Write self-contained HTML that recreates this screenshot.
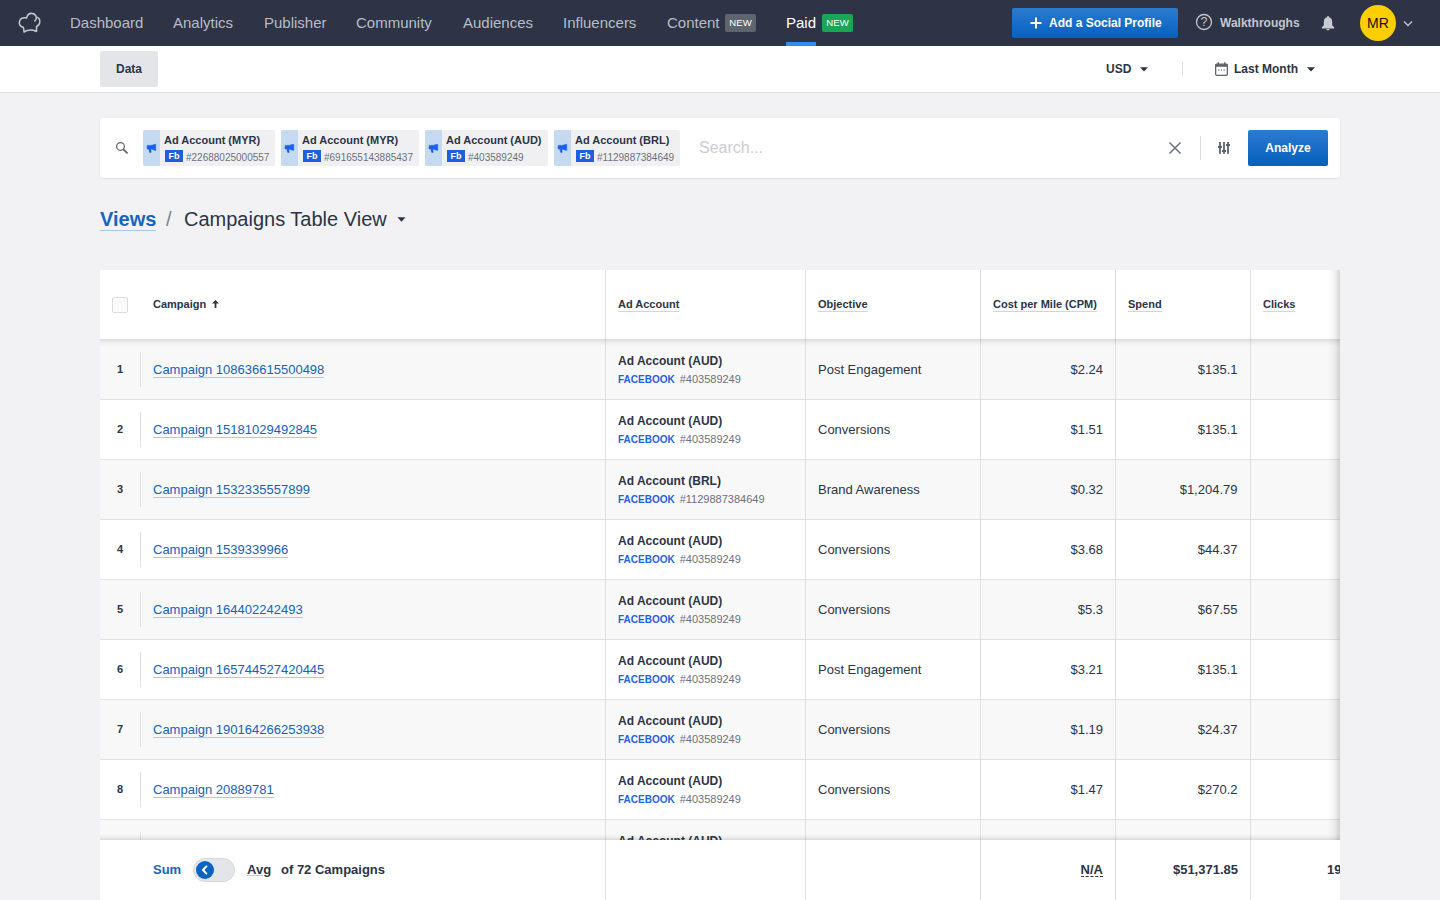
<!DOCTYPE html>
<html><head><meta charset="utf-8">
<style>
*{box-sizing:border-box;margin:0;padding:0}
html,body{width:1440px;height:900px;overflow:hidden;background:#f2f2f4;font-family:"Liberation Sans",sans-serif;color:#2b3445}
.abs{position:absolute}
#nav{position:absolute;left:0;top:0;width:1440px;height:46px;background:#2e3445}
.ni{position:absolute;top:0;height:46px;line-height:45px;font-size:15px;color:#b6bcc9;white-space:nowrap}
.badge{position:absolute;top:14px;height:18px;line-height:18px;font-size:9.5px;font-weight:normal;color:#fff;text-align:center;border-radius:2px;letter-spacing:0.1px}
#sub{position:absolute;left:0;top:46px;width:1440px;height:47px;background:#fff;border-bottom:1px solid #dcdde1}
.tabdata{position:absolute;left:100px;top:5px;width:58px;height:36px;background:#e4e5e8;border-radius:2px;font-size:12px;font-weight:bold;line-height:36px;text-align:center;color:#2b3445}
.bold12{font-size:12px;font-weight:bold;color:#2b3445}
#search{position:absolute;left:100px;top:118px;width:1240px;height:60px;background:#fff;border-radius:3px;box-shadow:0 1px 2px rgba(0,0,0,.08)}
.chip{position:absolute;top:12px;height:36px;background:#f0f0f3;border-radius:2px}
.chip .ic{position:absolute;left:0;top:0;width:17px;height:36px;background:#c5d9f1;border-radius:2px 0 0 2px}
.chip .t1{position:absolute;left:21px;top:4px;font-size:11px;font-weight:bold;color:#2b3445;white-space:nowrap;line-height:13px}
.chip .fb{position:absolute;left:22px;top:20px;width:18px;height:12px;background:#1f5ede;color:#fff;font-size:9px;font-weight:bold;line-height:12px;text-align:center}
.chip .t2{position:absolute;left:43px;top:21px;font-size:10px;color:#6b717c;white-space:nowrap;line-height:13px}
#crumb{position:absolute;left:100px;top:205px;height:28px;white-space:nowrap}
#table{position:absolute;left:100px;top:270px;width:1240px;height:630px;background:#fff;overflow:hidden}
.th{position:absolute;top:0;height:69px}
.htxt{position:absolute;top:28px;font-size:11px;font-weight:bold;color:#2b3445;white-space:nowrap;line-height:13px;border-bottom:1px solid #d3d5da;padding-bottom:0}
.row{position:absolute;left:0;width:1240px;height:60px;border-bottom:1px solid #e2e2e3}
.row.odd{background:#f8f8f8}
.vl{position:absolute;top:0;width:1px;background:#dfdfe1}
.num{position:absolute;left:0;width:40px;text-align:center;font-size:11px;font-weight:bold;top:23px;line-height:13px;color:#2b3445}
.sep{position:absolute;left:40px;top:12px;width:1px;height:35px;background:#dfdfe1}
.camp{position:absolute;left:53px;top:22px;font-size:13px;color:#1262bb;line-height:15px;border-bottom:1px solid #a9c8ea;white-space:nowrap}
.aa{position:absolute;left:518px;top:14px;font-size:12px;font-weight:bold;color:#2b3445;white-space:nowrap;line-height:14px}
.aa2{position:absolute;left:518px;top:33px;font-size:10px;font-weight:bold;color:#1f63e0;white-space:nowrap;line-height:13px}
.aa2 span{font-weight:normal;color:#6b717c;font-size:11px;margin-left:5px}
.obj{position:absolute;left:718px;top:22px;font-size:13px;color:#2b3445;white-space:nowrap;line-height:16px}
.cpm{position:absolute;right:237px;top:22px;font-size:13px;color:#2b3445;white-space:nowrap;line-height:16px}
.spend{position:absolute;right:102.5px;top:22px;font-size:13px;color:#2b3445;white-space:nowrap;line-height:16px}
</style></head><body>

<div id="nav">
  <svg class="abs" style="left:18px;top:12px" width="24" height="22" viewBox="0 0 24 22"><path d="M5.5 15.5 C2 14.5 1 12 1.5 9.5 C2.2 6.5 5 5.5 8.5 6 C9.5 2.5 12 1 14.5 1.5 C16.5 2 18 3.5 18.3 5.2 C20.5 5.5 22 7.5 21.8 10 C21.6 12.5 20 14 18.5 14.5 L18.5 19.5 C14 17.5 10 17.5 6 20 Z M18.3 5.2 C18.5 6.8 17.8 8 16.8 9" fill="none" stroke="#c3c7cf" stroke-width="1.5" stroke-linejoin="round" stroke-linecap="round"/></svg>
  <div class="ni" style="left:70px">Dashboard</div>
  <div class="ni" style="left:173px">Analytics</div>
  <div class="ni" style="left:264px">Publisher</div>
  <div class="ni" style="left:356px">Community</div>
  <div class="ni" style="left:463px">Audiences</div>
  <div class="ni" style="left:563px">Influencers</div>
  <div class="ni" style="left:667px">Content</div>
  <div class="badge" style="left:725px;width:31px;background:#5f646f">NEW</div>
  <div class="ni" style="left:786px;color:#fff">Paid</div>
  <div class="abs" style="left:786px;top:42px;width:30px;height:4px;background:#2d8ef0"></div>
  <div class="badge" style="left:822px;width:31px;background:#1aa557">NEW</div>

  <div class="abs" style="left:1012px;top:8px;width:166px;height:30px;border-radius:2px;background:linear-gradient(#2a7ad0,#0661c0)">
    <svg class="abs" style="left:18px;top:9px" width="12" height="12" viewBox="0 0 12 12"><path d="M6 0.5V11.5M0.5 6H11.5" stroke="#fff" stroke-width="2"/></svg>
    <div class="abs" style="left:37px;top:0;line-height:30px;font-size:12px;font-weight:bold;color:#fff;white-space:nowrap">Add a Social Profile</div>
  </div>
  <svg class="abs" style="left:1195px;top:13px" width="18" height="18" viewBox="0 0 18 18"><circle cx="9" cy="9" r="7.5" fill="none" stroke="#c3c7cf" stroke-width="1.3"/><text x="9" y="13.3" text-anchor="middle" font-family="Liberation Sans" font-size="12.5" fill="#c3c7cf">?</text></svg>
  <div class="abs" style="left:1220px;top:1px;line-height:45px;font-size:12px;font-weight:bold;color:#c3c7cf;white-space:nowrap">Walkthroughs</div>
  <svg class="abs" style="left:1321px;top:16px" width="14" height="15" viewBox="0 0 14 15"><path d="M7 0.3C8 0.3 8.3 0.9 8.3 1.4C10.3 1.9 11.2 3.6 11.2 5.8V9.3L13.2 11.6V12.4H0.8V11.6L2.8 9.3V5.8C2.8 3.6 3.7 1.9 5.7 1.4C5.7 0.9 6 0.3 7 0.3ZM5.4 13.1H8.6C8.6 14 7.9 14.3 7 14.3S5.4 14 5.4 13.1Z" fill="#c8cbd3"/></svg>
  <div class="abs" style="left:1360px;top:5px;width:36px;height:36px;border-radius:50%;background:#fdcf00;color:#111;font-size:14px;line-height:37px;text-align:center">MR</div>
  <svg class="abs" style="left:1403px;top:20px" width="10" height="7" viewBox="0 0 10 7"><path d="M1 1.5L5 5.5L9 1.5" fill="none" stroke="#c3c7cf" stroke-width="1.3"/></svg>
</div>

<div id="sub">
  <div class="tabdata">Data</div>
  <div class="abs bold12" style="left:1106px;top:16px;line-height:14px">USD</div>
  <svg class="abs" style="left:1140px;top:21px" width="8" height="5" viewBox="0 0 8 5"><path d="M0 0.3H8L4 4.5Z" fill="#2b3445"/></svg>
  <div class="abs" style="left:1182px;top:16px;width:1px;height:14px;background:#dcdde1"></div>
  <svg class="abs" style="left:1215px;top:16px" width="13" height="14" viewBox="0 0 13 14"><rect x="0.65" y="2.2" width="11.7" height="11.15" rx="1" fill="none" stroke="#5f646f" stroke-width="1.3"/><rect x="0.65" y="2.2" width="11.7" height="2.6" fill="#5f646f"/><rect x="2.6" y="0.3" width="1.4" height="2.6" fill="#5f646f"/><rect x="9" y="0.3" width="1.4" height="2.6" fill="#5f646f"/><rect x="3.2" y="7.4" width="1.2" height="1.2" fill="#5f646f"/><rect x="5.9" y="7.4" width="1.2" height="1.2" fill="#5f646f"/><rect x="8.6" y="7.4" width="1.2" height="1.2" fill="#5f646f"/></svg>
  <div class="abs bold12" style="left:1234px;top:16px;line-height:14px">Last Month</div>
  <svg class="abs" style="left:1307px;top:21px" width="8" height="5" viewBox="0 0 8 5"><path d="M0 0.3H8L4 4.5Z" fill="#2b3445"/></svg>
</div>

<div id="search">
  <svg class="abs" style="left:14px;top:22px" width="14" height="14" viewBox="0 0 14 14"><circle cx="6.5" cy="6.4" r="3.9" fill="none" stroke="#5f646f" stroke-width="1.25"/><path d="M9.4 9.3L13 12.9" stroke="#5f646f" stroke-width="1.8" stroke-linecap="round"/></svg>
  <div class="chip" style="left:43px;width:132px"><div class="ic"><svg class="abs" style="left:3px;top:13px" width="11" height="11" viewBox="0 0 11 11"><path d="M1.5 2.4H5.2L9.7 1.2V7.5L5.2 6H4.9L5.1 9.4H3.7L2.8 6H1.5Q1.1 6 1.1 5.5V2.9Q1.1 2.4 1.5 2.4Z" fill="#1a5ef0" stroke="#1a5ef0" stroke-width="0.6" stroke-linejoin="round"/></svg></div><div class="t1">Ad Account (MYR)</div><div class="fb">Fb</div><div class="t2">#22688025000557</div></div><div class="chip" style="left:181px;width:138px"><div class="ic"><svg class="abs" style="left:3px;top:13px" width="11" height="11" viewBox="0 0 11 11"><path d="M1.5 2.4H5.2L9.7 1.2V7.5L5.2 6H4.9L5.1 9.4H3.7L2.8 6H1.5Q1.1 6 1.1 5.5V2.9Q1.1 2.4 1.5 2.4Z" fill="#1a5ef0" stroke="#1a5ef0" stroke-width="0.6" stroke-linejoin="round"/></svg></div><div class="t1">Ad Account (MYR)</div><div class="fb">Fb</div><div class="t2">#691655143885437</div></div><div class="chip" style="left:325px;width:123px"><div class="ic"><svg class="abs" style="left:3px;top:13px" width="11" height="11" viewBox="0 0 11 11"><path d="M1.5 2.4H5.2L9.7 1.2V7.5L5.2 6H4.9L5.1 9.4H3.7L2.8 6H1.5Q1.1 6 1.1 5.5V2.9Q1.1 2.4 1.5 2.4Z" fill="#1a5ef0" stroke="#1a5ef0" stroke-width="0.6" stroke-linejoin="round"/></svg></div><div class="t1">Ad Account (AUD)</div><div class="fb">Fb</div><div class="t2">#403589249</div></div><div class="chip" style="left:454px;width:126px"><div class="ic"><svg class="abs" style="left:3px;top:13px" width="11" height="11" viewBox="0 0 11 11"><path d="M1.5 2.4H5.2L9.7 1.2V7.5L5.2 6H4.9L5.1 9.4H3.7L2.8 6H1.5Q1.1 6 1.1 5.5V2.9Q1.1 2.4 1.5 2.4Z" fill="#1a5ef0" stroke="#1a5ef0" stroke-width="0.6" stroke-linejoin="round"/></svg></div><div class="t1">Ad Account (BRL)</div><div class="fb">Fb</div><div class="t2">#1129887384649</div></div>
  <div class="abs" style="left:599px;top:20px;font-size:16px;line-height:19px;color:#cbccd1">Search...</div>
  <svg class="abs" style="left:1068px;top:23px" width="14" height="14" viewBox="0 0 14 14"><path d="M1.5 1.5L12.5 12.5M12.5 1.5L1.5 12.5" stroke="#6b717c" stroke-width="1.5"/></svg>
  <div class="abs" style="left:1100px;top:18px;width:1px;height:24px;background:#dcdde1"></div>
  <svg class="abs" style="left:1118px;top:24px" width="12" height="12" viewBox="0 0 12 12"><g fill="#5b616d"><rect x="1.1" y="0" width="1.8" height="11.8"/><rect x="5.1" y="0" width="1.8" height="11.8"/><rect x="9.1" y="0" width="1.8" height="11.8"/><rect x="0" y="4" width="4" height="2"/><rect x="4" y="8" width="4" height="2"/><rect x="8" y="2" width="4" height="2"/></g></svg>
  <div class="abs" style="left:1148px;top:12px;width:80px;height:36px;border-radius:2px;background:linear-gradient(#2c7bd0,#0660bd);color:#fff;font-size:12px;font-weight:bold;line-height:36px;text-align:center">Analyze</div>
</div>

<div id="crumb">
  <div class="abs" style="left:0;top:0;font-size:20px;font-weight:bold;color:#1565c0;line-height:28px;white-space:nowrap">Views</div>
  <div class="abs" style="left:0;top:25px;width:56px;height:1px;background:#a7c7ea"></div>
  <div class="abs" style="left:66px;top:0;font-size:20px;color:#7d828b;line-height:28px">/</div>
  <div class="abs" style="left:84px;top:0;font-size:20px;color:#2b3445;line-height:28px;white-space:nowrap">Campaigns Table View</div>
  <svg class="abs" style="left:297px;top:12px" width="9" height="5" viewBox="0 0 9 5"><path d="M0.5 0.2H8.5L4.5 4.7Z" fill="#2b3445"/></svg>
</div>

<div id="table">
<div class="abs" style="left:12px;top:27px;width:16px;height:16px;border:1px solid #dadce0;border-radius:2px;background:#fafafb"></div>
<div class="htxt" style="left:53px;border-bottom:none">Campaign</div>
<svg class="abs" style="left:112px;top:30px" width="7" height="8" viewBox="0 0 7 8"><path d="M3.5 0L7 3.6H4.4V8H2.6V3.6H0Z" fill="#2b3445"/></svg>
<div class="htxt" style="left:518px">Ad Account</div>
<div class="htxt" style="left:718px">Objective</div>
<div class="htxt" style="left:893px">Cost per Mile (CPM)</div>
<div class="htxt" style="left:1028px">Spend</div>
<div class="htxt" style="left:1163px">Clicks</div>
<div class="row odd" style="top:70px"><div class="num">1</div><div class="sep"></div><div class="camp">Campaign 108636615500498</div><div class="aa">Ad Account (AUD)</div><div class="aa2">FACEBOOK<span>#403589249</span></div><div class="obj">Post Engagement</div><div class="cpm">$2.24</div><div class="spend">$135.1</div></div>
<div class="row" style="top:130px"><div class="num">2</div><div class="sep"></div><div class="camp">Campaign 15181029492845</div><div class="aa">Ad Account (AUD)</div><div class="aa2">FACEBOOK<span>#403589249</span></div><div class="obj">Conversions</div><div class="cpm">$1.51</div><div class="spend">$135.1</div></div>
<div class="row odd" style="top:190px"><div class="num">3</div><div class="sep"></div><div class="camp">Campaign 1532335557899</div><div class="aa">Ad Account (BRL)</div><div class="aa2">FACEBOOK<span>#1129887384649</span></div><div class="obj">Brand Awareness</div><div class="cpm">$0.32</div><div class="spend">$1,204.79</div></div>
<div class="row" style="top:250px"><div class="num">4</div><div class="sep"></div><div class="camp">Campaign 1539339966</div><div class="aa">Ad Account (AUD)</div><div class="aa2">FACEBOOK<span>#403589249</span></div><div class="obj">Conversions</div><div class="cpm">$3.68</div><div class="spend">$44.37</div></div>
<div class="row odd" style="top:310px"><div class="num">5</div><div class="sep"></div><div class="camp">Campaign 164402242493</div><div class="aa">Ad Account (AUD)</div><div class="aa2">FACEBOOK<span>#403589249</span></div><div class="obj">Conversions</div><div class="cpm">$5.3</div><div class="spend">$67.55</div></div>
<div class="row" style="top:370px"><div class="num">6</div><div class="sep"></div><div class="camp">Campaign 165744527420445</div><div class="aa">Ad Account (AUD)</div><div class="aa2">FACEBOOK<span>#403589249</span></div><div class="obj">Post Engagement</div><div class="cpm">$3.21</div><div class="spend">$135.1</div></div>
<div class="row odd" style="top:430px"><div class="num">7</div><div class="sep"></div><div class="camp">Campaign 190164266253938</div><div class="aa">Ad Account (AUD)</div><div class="aa2">FACEBOOK<span>#403589249</span></div><div class="obj">Conversions</div><div class="cpm">$1.19</div><div class="spend">$24.37</div></div>
<div class="row" style="top:490px"><div class="num">8</div><div class="sep"></div><div class="camp">Campaign 20889781</div><div class="aa">Ad Account (AUD)</div><div class="aa2">FACEBOOK<span>#403589249</span></div><div class="obj">Conversions</div><div class="cpm">$1.47</div><div class="spend">$270.2</div></div>
<div class="row odd" style="top:550px"><div class="num">9</div><div class="sep"></div><div class="camp">Campaign 2100000000</div><div class="aa">Ad Account (AUD)</div><div class="aa2">FACEBOOK<span>#403589249</span></div><div class="obj">Conversions</div><div class="cpm">$1.00</div><div class="spend">$100.0</div></div>
<div class="vl" style="left:505px;height:630px"></div>
<div class="vl" style="left:705px;height:630px"></div>
<div class="vl" style="left:880px;height:630px"></div>
<div class="vl" style="left:1015px;height:630px"></div>
<div class="vl" style="left:1150px;height:630px"></div>
<div class="abs" style="left:0;top:69px;width:1240px;height:7px;background:linear-gradient(rgba(0,0,0,.15),rgba(0,0,0,.06) 35%,rgba(0,0,0,0))"></div>
<div class="abs" style="left:0;top:570px;width:1240px;height:60px;background:#fff">
  <div class="abs" style="left:0;top:-6px;width:1240px;height:6px;background:linear-gradient(rgba(0,0,0,0),rgba(0,0,0,.05) 60%,rgba(0,0,0,.13))"></div>
  <div class="abs" style="left:53px;top:22px;font-size:13px;font-weight:bold;color:#1565c0;line-height:16px">Sum</div>
  <div class="abs" style="left:93px;top:18px;width:42px;height:24px;border-radius:12px;background:#e4e5e8;border:1px solid #d6d8dc"></div>
  <div class="abs" style="left:96px;top:21px;width:18px;height:18px;border-radius:50%;background:#0c63c2"></div>
  <svg class="abs" style="left:101px;top:25px" width="7" height="10" viewBox="0 0 7 10"><path d="M5.4 1.4L2 5L5.4 8.6" fill="none" stroke="#fff" stroke-width="2" stroke-linecap="round" stroke-linejoin="round"/></svg>
  <div class="abs" style="left:147px;top:22px;font-size:13px;font-weight:bold;color:#2b3445;line-height:16px">Avg</div>
  <div class="abs" style="left:147px;top:35px;width:16px;height:1px;background:#c8cbd1"></div>
  <div class="abs" style="left:181px;top:22px;font-size:13px;font-weight:bold;color:#2b3445;line-height:16px;white-space:nowrap">of 72 Campaigns</div>
  <div class="abs" style="left:505px;top:0;width:1px;height:60px;background:#dfdfe1"></div>
  <div class="abs" style="left:705px;top:0;width:1px;height:60px;background:#dfdfe1"></div>
  <div class="abs" style="left:880px;top:0;width:1px;height:60px;background:#dfdfe1"></div>
  <div class="abs" style="left:1015px;top:0;width:1px;height:60px;background:#dfdfe1"></div>
  <div class="abs" style="left:1150px;top:0;width:1px;height:60px;background:#dfdfe1"></div>
  <div class="abs" style="right:237px;top:23px;font-size:13px;font-weight:bold;color:#2b3445;line-height:13px;border-bottom:1px dashed #2b3445">N/A</div>
  <div class="abs" style="right:102px;top:22px;font-size:13px;font-weight:bold;color:#2b3445;line-height:16px">$51,371.85</div>
  <div class="abs" style="left:1227px;top:22px;font-size:13px;font-weight:bold;color:#2b3445;line-height:16px">19,</div>
</div>
<div class="abs" style="left:1228px;top:0;width:12px;height:570px;background:linear-gradient(to right,rgba(0,0,0,0),rgba(0,0,0,.05) 55%,rgba(0,0,0,.16))"></div>
</div>

</body></html>
